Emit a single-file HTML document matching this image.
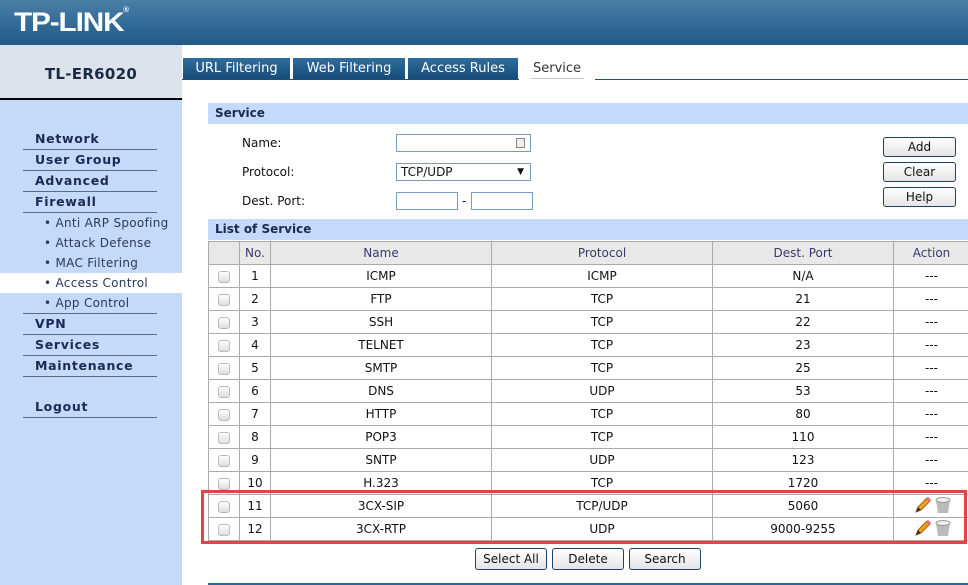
<!DOCTYPE html>
<html><head><meta charset="utf-8"><style>
*{margin:0;padding:0;box-sizing:border-box}
body{width:968px;height:585px;overflow:hidden;background:#fff;font-family:"DejaVu Sans","Liberation Sans",sans-serif;font-size:12px;color:#111;position:relative}
.a{position:absolute;white-space:nowrap}
#hdr{left:0;top:0;width:968px;height:45px;background:linear-gradient(#4a7ea6,#1f5a88)}
#logo{left:14px;top:7px;color:#fff;font:bold 27px "Liberation Sans",sans-serif;letter-spacing:-1px;transform:scaleX(1.1);transform-origin:left}
#side{left:0;top:45px;width:182px;height:540px;background:#c5d9f8}
#model{left:0;top:45px;width:182px;height:55px;background:#dde3ed;border-bottom:2px solid #000;text-align:center;line-height:58px;font-size:15px;font-weight:bold;color:#1a2a45;letter-spacing:0.3px}
.m{left:23px;width:134px;height:21px;border-bottom:1px solid #5a6a88;font-weight:bold;font-size:12.5px;letter-spacing:0.7px;color:#1a2a55;padding-left:12px;line-height:20px}
.s{left:0;width:182px;height:20px;font-size:12px;letter-spacing:0.3px;color:#2a3a5a;padding-left:44px;line-height:20px}
.tab{top:58px;height:21px;background:linear-gradient(#2f6d9c,#174c78);color:#fff;font-size:13px;line-height:21px;text-align:center}
.sec{left:208px;width:760px;height:21px;background:#c5d9fb;font-weight:bold;color:#1a2a55;padding-left:7px;line-height:21px;font-size:12px}
.lbl{left:242px;font-size:12px}
.in{border:1px solid #7a9cbf;background:#fff;height:18px}
.btn{border:1px solid #1f3f66;border-radius:3px;background:linear-gradient(#fff,#e4e4e4);text-align:center;font-size:12px;line-height:18px;height:20px}
table{position:absolute;left:208px;top:241px;border-collapse:collapse;width:762px;font-size:12px}
td{border:1px solid #aaa;height:23px;text-align:center;padding:0}
tr.h td{background:#e8e8e8;color:#3a3a6a;height:23px}
.cb{display:inline-block;width:12px;height:12px;border:1px solid #bbb;border-radius:3px;background:linear-gradient(#fff,#ddd);vertical-align:middle}
</style></head><body>
<div class="a" id="hdr"></div>
<div class="a" id="logo">TP-LINK<span style="font-size:7px;vertical-align:top">®</span></div>
<div class="a" id="side"></div>
<div class="a" id="model">TL-ER6020</div>
<div class="a m" style="top:129px">Network</div>
<div class="a m" style="top:150px">User Group</div>
<div class="a m" style="top:171px">Advanced</div>
<div class="a m" style="top:192px">Firewall</div>
<div class="a s" style="top:213px">• Anti ARP Spoofing</div>
<div class="a s" style="top:233px">• Attack Defense</div>
<div class="a s" style="top:253px">• MAC Filtering</div>
<div class="a s" style="top:273px;background:#fff">• Access Control</div>
<div class="a s" style="top:293px">• App Control</div>
<div class="a m" style="top:313px;border-top:1px solid #5a6a88;height:22px">VPN</div>
<div class="a m" style="top:335px">Services</div>
<div class="a m" style="top:356px">Maintenance</div>
<div class="a m" style="top:397px">Logout</div>

<div class="a" style="left:595px;top:79px;width:373px;height:1px;background:#1f4f7a"></div>
<div class="a" style="left:182px;top:79px;width:337px;height:1px;background:#1f4f7a"></div>
<div class="a tab" style="left:183px;width:107px">URL Filtering</div>
<div class="a tab" style="left:293px;width:112px">Web Filtering</div>
<div class="a tab" style="left:408px;width:110px">Access Rules</div>
<div class="a tab" style="left:519px;width:76px;background:#fff;color:#333;height:22px">Service</div>
<div class="a" style="left:530px;top:78px;width:54px;height:1px;background:#ccc"></div>

<div class="a sec" style="top:103px">Service</div>
<div class="a lbl" style="top:136px">Name:</div>
<div class="a lbl" style="top:165px">Protocol:</div>
<div class="a lbl" style="top:194px">Dest. Port:</div>
<div class="a in" style="left:396px;top:134px;width:135px"><div style="position:absolute;right:5px;top:3px;width:9px;height:10px;border:1px solid #888;background:#eee"></div></div>
<div class="a in" style="left:396px;top:163px;width:135px;font-size:12px;line-height:16px;padding-left:4px">TCP/UDP<span style="position:absolute;right:6px;font-size:9px">▼</span></div>
<div class="a in" style="left:396px;top:192px;width:62px"></div>
<div class="a" style="left:462px;top:194px">-</div>
<div class="a in" style="left:471px;top:192px;width:62px"></div>
<div class="a btn" style="left:883px;top:137px;width:73px">Add</div>
<div class="a btn" style="left:883px;top:162px;width:73px">Clear</div>
<div class="a btn" style="left:883px;top:187px;width:73px">Help</div>

<div class="a sec" style="top:219px">List of Service</div>
<table>
<colgroup><col style="width:31px"><col style="width:31px"><col style="width:221px"><col style="width:221px"><col style="width:181px"><col></colgroup>
<tr class="h"><td></td><td>No.</td><td>Name</td><td>Protocol</td><td>Dest. Port</td><td>Action</td></tr>
<tr><td><span class="cb"></span></td><td>1</td><td>ICMP</td><td>ICMP</td><td>N/A</td><td>---</td></tr>
<tr><td><span class="cb"></span></td><td>2</td><td>FTP</td><td>TCP</td><td>21</td><td>---</td></tr>
<tr><td><span class="cb"></span></td><td>3</td><td>SSH</td><td>TCP</td><td>22</td><td>---</td></tr>
<tr><td><span class="cb"></span></td><td>4</td><td>TELNET</td><td>TCP</td><td>23</td><td>---</td></tr>
<tr><td><span class="cb"></span></td><td>5</td><td>SMTP</td><td>TCP</td><td>25</td><td>---</td></tr>
<tr><td><span class="cb"></span></td><td>6</td><td>DNS</td><td>UDP</td><td>53</td><td>---</td></tr>
<tr><td><span class="cb"></span></td><td>7</td><td>HTTP</td><td>TCP</td><td>80</td><td>---</td></tr>
<tr><td><span class="cb"></span></td><td>8</td><td>POP3</td><td>TCP</td><td>110</td><td>---</td></tr>
<tr><td><span class="cb"></span></td><td>9</td><td>SNTP</td><td>UDP</td><td>123</td><td>---</td></tr>
<tr><td><span class="cb"></span></td><td>10</td><td>H.323</td><td>TCP</td><td>1720</td><td>---</td></tr>
<tr><td><span class="cb"></span></td><td>11</td><td>3CX-SIP</td><td>TCP/UDP</td><td>5060</td><td><svg width="40" height="18" viewBox="0 0 40 18"><path d="M4 16 L6 11 L15 2 L18 5 L9 14 Z" fill="#f0a020" stroke="#a06010"/><path d="M15 2 L18 5" stroke="#e07070" stroke-width="3"/><path d="M4 16 L6 11 L9 14Z" fill="#333"/><path d="M24 4 L38 4 L36 17 L26 17Z" fill="#bbb"/><ellipse cx="31" cy="4" rx="7" ry="2.5" fill="#eee" stroke="#999"/></svg></td></tr>
<tr><td><span class="cb"></span></td><td>12</td><td>3CX-RTP</td><td>UDP</td><td>9000-9255</td><td><svg width="40" height="18" viewBox="0 0 40 18"><path d="M4 16 L6 11 L15 2 L18 5 L9 14 Z" fill="#f0a020" stroke="#a06010"/><path d="M15 2 L18 5" stroke="#e07070" stroke-width="3"/><path d="M4 16 L6 11 L9 14Z" fill="#333"/><path d="M24 4 L38 4 L36 17 L26 17Z" fill="#bbb"/><ellipse cx="31" cy="4" rx="7" ry="2.5" fill="#eee" stroke="#999"/></svg></td></tr>
</table>
<div class="a" style="left:201px;top:490px;width:766px;height:54px;border:3px solid #e04444"></div>
<div class="a btn" style="left:475px;top:548px;width:72px;height:22px;line-height:20px">Select All</div>
<div class="a btn" style="left:552px;top:548px;width:72px;height:22px;line-height:20px">Delete</div>
<div class="a btn" style="left:629px;top:548px;width:72px;height:22px;line-height:20px">Search</div>
<div class="a" style="left:208px;top:583px;width:760px;height:2px;background:#2a6a9a"></div>
</body></html>
